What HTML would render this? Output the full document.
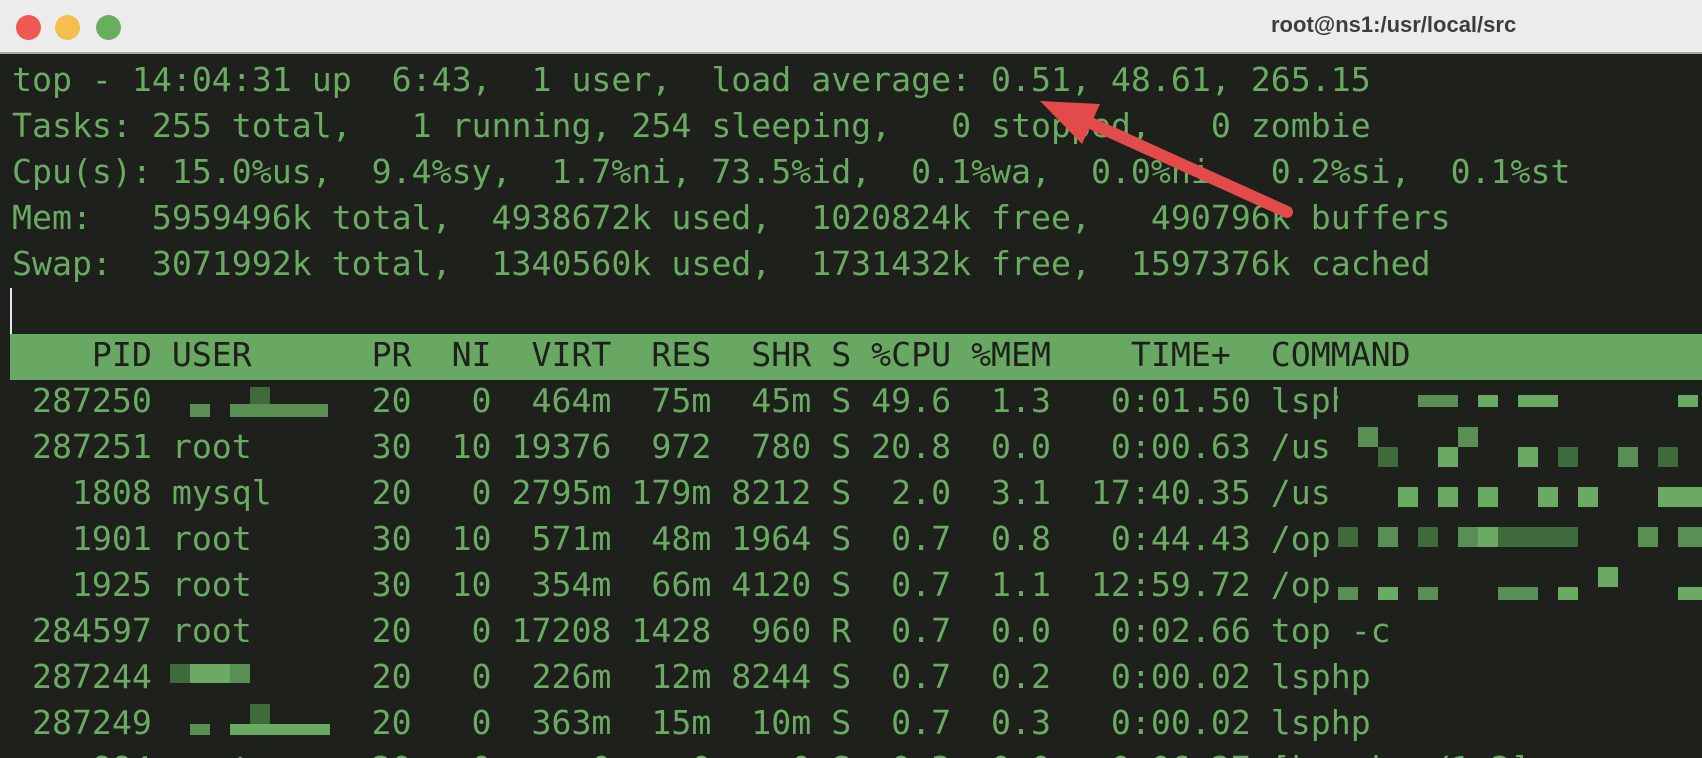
<!DOCTYPE html>
<html><head><meta charset="utf-8"><style>
html,body{margin:0;padding:0;width:1702px;height:758px;overflow:hidden;background:#1d201b;}
#wrap{position:relative;width:1702px;height:758px;overflow:hidden;background:#1d201b;}
.title{position:absolute;left:0;top:0;width:1702px;height:52px;background:#ececec;border-bottom:2px solid #a8a8a8;}
.dot{position:absolute;top:15px;width:25px;height:25px;border-radius:50%;}
.ttl{position:absolute;left:1271px;top:12px;font:bold 22px "Liberation Sans",sans-serif;color:#3d3d3d;white-space:pre;}
.term{position:absolute;left:12px;top:57px;font-family:"DejaVu Sans Mono","Liberation Mono",monospace;font-size:33.2px;line-height:45.9px;color:#6aaa62;white-space:pre;}
.hdr{position:absolute;left:10px;top:334px;width:1692px;height:46px;background:#69a862;}
.hl{color:#1d201b;}
.b{position:absolute;}
.g1{background:#6aaa62}.g2{background:#5a8f53}.g3{background:#3f6a3b}
</style></head><body><div id="wrap">
<div class="title">
<div class="dot" style="left:16px;background:#ee5a52"></div>
<div class="dot" style="left:55px;background:#f4bf4f"></div>
<div class="dot" style="left:96px;background:#69ad5f"></div>
<div class="ttl">root@ns1:/usr/local/src</div>
</div>
<div class="hdr"></div>
<div class="b" style="left:10px;top:288px;width:2px;height:46px;background:#e8e8e8"></div>
<div class="term">top - 14:04:31 up  6:43,  1 user,  load average: 0.51, 48.61, 265.15
Tasks: 255 total,   1 running, 254 sleeping,   0 stopped,   0 zombie
Cpu(s): 15.0%us,  9.4%sy,  1.7%ni, 73.5%id,  0.1%wa,  0.0%hi,  0.2%si,  0.1%st
Mem:   5959496k total,  4938672k used,  1020824k free,   490796k buffers
Swap:  3071992k total,  1340560k used,  1731432k free,  1597376k cached

<span class="hl">    PID USER      PR  NI  VIRT  RES  SHR S %CPU %MEM    TIME+  COMMAND</span>
 287250           20   0  464m  75m  45m S 49.6  1.3   0:01.50 lsph
 287251 root      30  10 19376  972  780 S 20.8  0.0   0:00.63 /us
   1808 mysql     20   0 2795m 179m 8212 S  2.0  3.1  17:40.35 /us
   1901 root      30  10  571m  48m 1964 S  0.7  0.8   0:44.43 /op
   1925 root      30  10  354m  66m 4120 S  0.7  1.1  12:59.72 /op
 284597 root      20   0 17208 1428  960 R  0.7  0.0   0:02.66 top -c
 287244           20   0  226m  12m 8244 S  0.7  0.2   0:00.02 lsphp
 287249           20   0  363m  15m  10m S  0.7  0.3   0:00.02 lsphp
    884 root      20   0     0    0    0 S  0.3  0.0   0:06.27 [kworker/1:2]</div>

<div class="b g2" style="left:190px;top:404px;width:20px;height:13px"></div>
<div class="b g2" style="left:230px;top:404px;width:98px;height:13px"></div>
<div class="b g3" style="left:250px;top:387px;width:20px;height:17px"></div>
<div class="b g3" style="left:170px;top:664px;width:20px;height:19px"></div>
<div class="b g1" style="left:190px;top:664px;width:40px;height:19px"></div>
<div class="b g2" style="left:230px;top:664px;width:20px;height:19px"></div>
<div class="b g2" style="left:190px;top:724px;width:20px;height:11px"></div>
<div class="b g1" style="left:230px;top:724px;width:100px;height:11px"></div>
<div class="b g3" style="left:250px;top:704px;width:20px;height:20px"></div>

<div class="b" style="left:1338px;top:380px;width:364px;height:44px;background:#1d201b"></div>
<div class="b" style="left:1338px;top:424px;width:364px;height:184px;background:#1d201b"></div>
<div class="b g2" style="left:1418px;top:395px;width:40px;height:12px"></div>
<div class="b g1" style="left:1478px;top:395px;width:20px;height:12px"></div>
<div class="b g1" style="left:1518px;top:395px;width:40px;height:12px"></div>
<div class="b g1" style="left:1678px;top:395px;width:20px;height:12px"></div>

<div class="b g2" style="left:1358px;top:427px;width:20px;height:20px"></div>
<div class="b g2" style="left:1458px;top:427px;width:20px;height:20px"></div>
<div class="b g3" style="left:1378px;top:447px;width:20px;height:20px"></div>
<div class="b g1" style="left:1438px;top:447px;width:20px;height:20px"></div>
<div class="b g1" style="left:1518px;top:447px;width:20px;height:20px"></div>
<div class="b g3" style="left:1558px;top:447px;width:20px;height:20px"></div>
<div class="b g2" style="left:1618px;top:447px;width:20px;height:20px"></div>
<div class="b g3" style="left:1658px;top:447px;width:20px;height:20px"></div>

<div class="b g1" style="left:1398px;top:487px;width:20px;height:20px"></div>
<div class="b g1" style="left:1438px;top:487px;width:20px;height:20px"></div>
<div class="b g1" style="left:1478px;top:487px;width:20px;height:20px"></div>
<div class="b g1" style="left:1538px;top:487px;width:20px;height:20px"></div>
<div class="b g1" style="left:1578px;top:487px;width:20px;height:20px"></div>
<div class="b g1" style="left:1658px;top:487px;width:44px;height:20px"></div>

<div class="b g3" style="left:1338px;top:527px;width:20px;height:20px"></div>
<div class="b g2" style="left:1378px;top:527px;width:20px;height:20px"></div>
<div class="b g3" style="left:1418px;top:527px;width:20px;height:20px"></div>
<div class="b g2" style="left:1458px;top:527px;width:20px;height:20px"></div>
<div class="b g1" style="left:1478px;top:527px;width:20px;height:20px"></div>
<div class="b g3" style="left:1498px;top:527px;width:80px;height:20px"></div>
<div class="b g2" style="left:1638px;top:527px;width:20px;height:20px"></div>
<div class="b g2" style="left:1678px;top:527px;width:24px;height:20px"></div>

<div class="b g2" style="left:1338px;top:587px;width:20px;height:13px"></div>
<div class="b g1" style="left:1378px;top:587px;width:20px;height:13px"></div>
<div class="b g2" style="left:1418px;top:587px;width:20px;height:13px"></div>
<div class="b g2" style="left:1498px;top:587px;width:40px;height:13px"></div>
<div class="b g1" style="left:1558px;top:587px;width:20px;height:13px"></div>
<div class="b g1" style="left:1678px;top:587px;width:24px;height:13px"></div>
<div class="b g1" style="left:1598px;top:567px;width:20px;height:20px"></div>

<svg style="position:absolute;left:0;top:0" width="1702" height="758">
<line x1="1287" y1="212" x2="1075" y2="116" stroke="#e34b4b" stroke-width="12" stroke-linecap="round"/>
<polygon points="1040,101 1100,104 1082,144" fill="#e34b4b"/>
</svg>
</div></body></html>
